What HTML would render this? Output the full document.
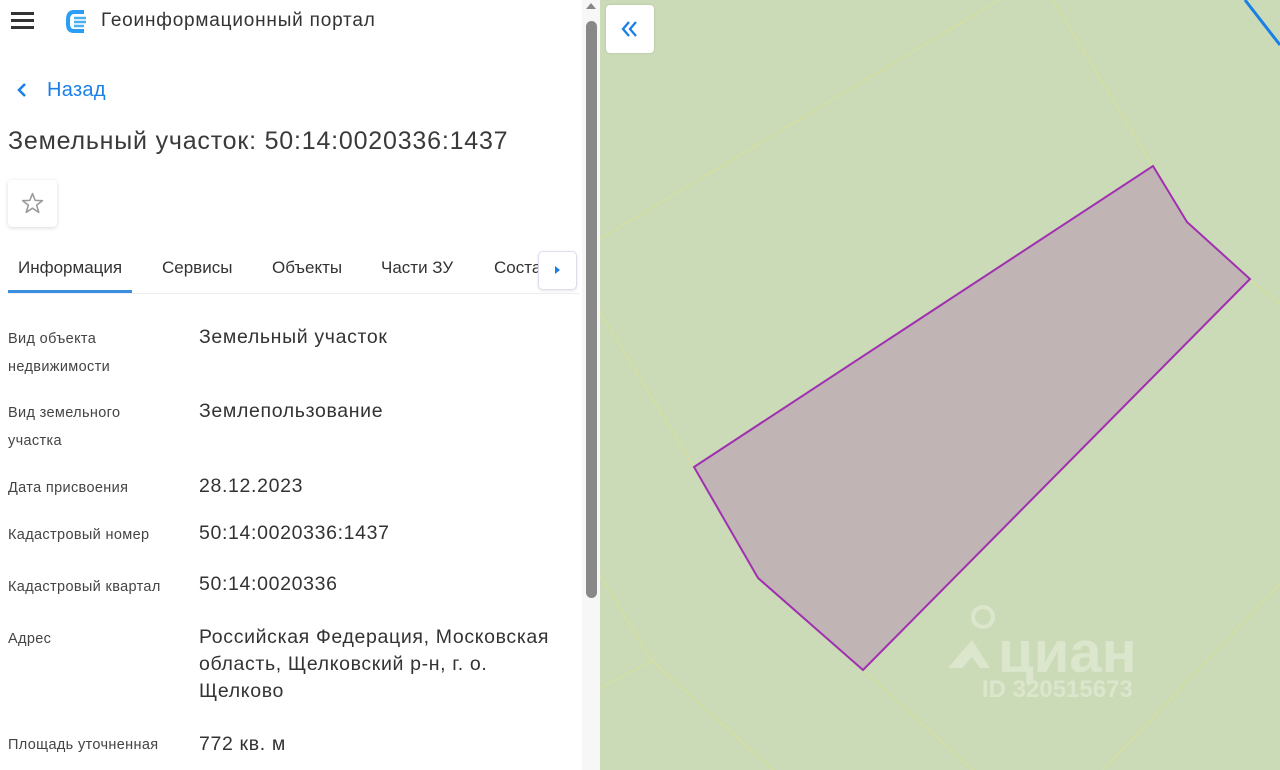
<!DOCTYPE html>
<html><head><meta charset="utf-8"><style>
*{margin:0;padding:0;box-sizing:border-box}
body{width:1280px;height:770px;overflow:hidden;background:#fff;font-family:"Liberation Sans","Noto Sans CJK SC",sans-serif;position:relative;color:#333}
.a{position:absolute;white-space:nowrap}
.lab{font-size:14.5px;color:#444;line-height:28px;letter-spacing:.35px}
.val{font-size:19.5px;color:#333;line-height:27px;letter-spacing:.65px}
.tab{font-size:17px;color:#333;top:258px}
</style></head><body>
<div class="a" style="left:11px;top:12px;width:23px;height:3px;background:#333;box-shadow:0 7px 0 #333,0 14px 0 #333"></div>
<svg class="a" style="left:64px;top:8px" width="26" height="26" viewBox="0 0 26 26"><path d="M20 4 H10 Q4 4 4 12 V16 Q4 23 10 23 H20" fill="none" stroke="#2a9df4" stroke-width="4"/><path d="M10 10 H22 M10 14 H22 M10 18 H20" stroke="#4ab0f0" stroke-width="2.5"/></svg>
<div class="a" style="left:101px;top:10px;font-size:19px;color:#333;letter-spacing:.8px">Геоинформационный портал</div>
<svg class="a" style="left:15px;top:82px" width="14" height="16"><path d="M10 2 L4 8 L10 14" fill="none" stroke="#1a7fe6" stroke-width="2.5"/></svg>
<div class="a" style="left:47px;top:79px;font-size:20px;color:#1a7fe6;letter-spacing:.3px">Назад</div>
<div class="a" style="left:8px;top:127px;font-size:25px;color:#3a3a3a;letter-spacing:.8px">Земельный участок: 50:14:0020336:1437</div>
<div class="a" style="left:8px;top:180px;width:49px;height:47px;border-radius:4px;box-shadow:0 1px 4px rgba(0,0,0,.15);background:#fff"></div>
<svg class="a" style="left:20px;top:191px" width="25" height="25" viewBox="0 0 24 24"><path d="M12 2.5 L14.6 9 L21.5 9.3 L16 13.6 L18 20.5 L12 16.5 L6 20.5 L8 13.6 L2.5 9.3 L9.4 9 Z" fill="none" stroke="#999" stroke-width="1.5" stroke-linejoin="round"/></svg>
<div class="a tab" style="left:18px">Информация</div>
<div class="a tab" style="left:162px">Сервисы</div>
<div class="a tab" style="left:272px">Объекты</div>
<div class="a tab" style="left:381px">Части ЗУ</div>
<div class="a tab" style="left:494px">Состав</div>
<div class="a" style="left:538px;top:251px;width:46px;height:40px;background:#fff"></div>
<div class="a" style="left:538px;top:251px;width:39px;height:39px;border:1px solid #dde;border-radius:5px;background:#fff;box-shadow:0 1px 3px rgba(0,0,0,.1)"></div>
<div class="a" style="left:555px;top:266px;width:0;height:0;border-left:5px solid #1a7fe6;border-top:4px solid transparent;border-bottom:4px solid transparent"></div>
<div class="a" style="left:8px;top:290px;width:124px;height:3px;background:#3b8ee0"></div>
<div class="a" style="left:8px;top:293px;width:572px;height:1px;background:#eee"></div>

<div class="a lab" style="left:8px;top:325px">Вид объекта<br>недвижимости</div>
<div class="a val" style="left:199px;top:324px">Земельный участок</div>
<div class="a lab" style="left:8px;top:399px">Вид земельного<br>участка</div>
<div class="a val" style="left:199px;top:398px">Землепользование</div>
<div class="a lab" style="left:8px;top:474px">Дата присвоения</div>
<div class="a val" style="left:199px;top:473px">28.12.2023</div>
<div class="a lab" style="left:8px;top:521px">Кадастровый номер</div>
<div class="a val" style="left:199px;top:520px">50:14:0020336:1437</div>
<div class="a lab" style="left:8px;top:573px">Кадастровый квартал</div>
<div class="a val" style="left:199px;top:571px">50:14:0020336</div>
<div class="a lab" style="left:8px;top:625px">Адрес</div>
<div class="a val" style="left:199px;top:624px">Российская Федерация, Московская<br>область, Щелковский р-н, г. о.<br>Щелково</div>
<div class="a lab" style="left:8px;top:731px">Площадь уточненная</div>
<div class="a val" style="left:199px;top:731px">772 кв. м</div>

<div class="a" style="left:582px;top:0;width:18px;height:770px;background:#f7f7f7"></div>
<div class="a" style="left:586px;top:3px;width:0;height:0;border-bottom:6px solid #888;border-left:5px solid transparent;border-right:5px solid transparent"></div>
<div class="a" style="left:586px;top:21px;width:11px;height:577px;border-radius:6px;background:#888"></div>

<svg class="a" style="left:600px;top:0" width="680" height="770" viewBox="600 0 680 770">
<rect x="600" y="0" width="680" height="770" fill="#cbdbb7"/>
<g stroke="#d6e09a" stroke-width="1.2" fill="none">
<path d="M600 239 L999 0"/>
<path d="M1053 0 L1153 166"/>
<path d="M600 312 L694 467"/>
<path d="M1250 280 L1280 304"/>
<path d="M600 575 L652 661 L600 688"/>
<path d="M652 661 L773 770"/>
<path d="M863 670 L973 770"/>
<path d="M1103 770 L1280 584"/>
</g>
<path d="M1245 0 L1280 45" stroke="#1a7fe6" stroke-width="3"/>
<polygon points="694,467 1153,166 1187,222 1250,279 863,670 758,578" fill="#c1b4b5" stroke="#a030b0" stroke-width="2"/>
<g fill="#dde8cf" opacity=".9"><text x="998" y="672" font-size="58" font-family="Liberation Sans" font-weight="bold">циан</text><text x="982" y="697" font-size="24" font-family="Liberation Sans" font-weight="bold">ID 320515673</text>
<path d="M948 668 L972 640 L990 668 L980 668 L972 657 L962 668Z"/><circle cx="983" cy="617" r="10" fill="none" stroke="#dde8cf" stroke-width="4"/></g>
</svg>
<div class="a" style="left:606px;top:5px;width:48px;height:48px;background:#fff;border-radius:4px;box-shadow:0 0 2px rgba(0,0,0,.15)"></div>
<svg class="a" style="left:620px;top:19px" width="20" height="20"><path d="M9 3 L3 10 L9 17 M16 3 L10 10 L16 17" fill="none" stroke="#1a7fe6" stroke-width="2.3"/></svg>
</body></html>
